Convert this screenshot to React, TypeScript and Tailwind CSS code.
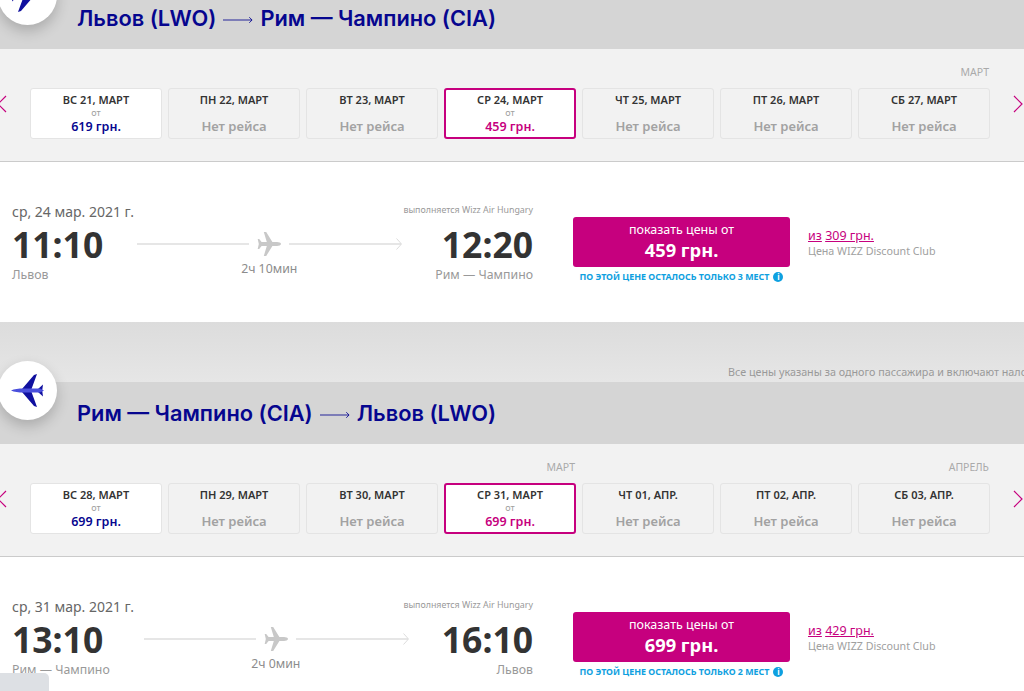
import React from 'react';

const body = "font-['Noto_Sans','Open_Sans',sans-serif]";

type Day = { label: string; price?: string; selected?: boolean };
type Leg = {
  from: string;
  to: string;
  date: string;
  dep: string;
  arr: string;
  depCity: string;
  arrCity: string;
  duration: string;
  price: string;
  seats: string;
  club: string;
  flip?: boolean;
  months: string[];
  days: Day[];
};

const legs: Leg[] = [
  {
    from: 'Львов (LWO)',
    to: 'Рим — Чампино (CIA)',
    date: 'ср, 24 мар. 2021 г.',
    dep: '11:10',
    arr: '12:20',
    depCity: 'Львов',
    arrCity: 'Рим — Чампино',
    duration: '2ч 10мин',
    price: '459 грн.',
    seats: 'ПО ЭТОЙ ЦЕНЕ ОСТАЛОСЬ ТОЛЬКО 3 МЕСТ',
    club: '309 грн.',
    flip: true,
    months: ['', '', '', '', '', '', 'МАРТ'],
    days: [
      { label: 'ВС 21, МАРТ', price: '619 грн.' },
      { label: 'ПН 22, МАРТ' },
      { label: 'ВТ 23, МАРТ' },
      { label: 'СР 24, МАРТ', price: '459 грн.', selected: true },
      { label: 'ЧТ 25, МАРТ' },
      { label: 'ПТ 26, МАРТ' },
      { label: 'СБ 27, МАРТ' },
    ],
  },
  {
    from: 'Рим — Чампино (CIA)',
    to: 'Львов (LWO)',
    date: 'ср, 31 мар. 2021 г.',
    dep: '13:10',
    arr: '16:10',
    depCity: 'Рим — Чампино',
    arrCity: 'Львов',
    duration: '2ч 0мин',
    price: '699 грн.',
    seats: 'ПО ЭТОЙ ЦЕНЕ ОСТАЛОСЬ ТОЛЬКО 2 МЕСТ',
    club: '429 грн.',
    months: ['', '', '', 'МАРТ', '', '', 'АПРЕЛЬ'],
    days: [
      { label: 'ВС 28, МАРТ', price: '699 грн.' },
      { label: 'ПН 29, МАРТ' },
      { label: 'ВТ 30, МАРТ' },
      { label: 'СР 31, МАРТ', price: '699 грн.', selected: true },
      { label: 'ЧТ 01, АПР.' },
      { label: 'ПТ 02, АПР.' },
      { label: 'СБ 03, АПР.' },
    ],
  },
];

const PLANE =
  'M24 12.5c0-1.2-2.2-1.9-4-1.9h-4.6L9.2 .5H6.8l3 10.1H4.6L2.2 7.6H.7l1.1 4.9-1.1 4.9h1.5l2.4-3h5.2l-3 10.1h2.4l6.2-10.1H20c1.8 0 4-.7 4-1.9z';

const PlaneBadge = ({ flip }: { flip?: boolean }) => (
  <div className="absolute left-[-2px] top-[-21px] z-10 flex h-[59px] w-[59px] items-center justify-center rounded-full bg-white shadow-[0_6px_14px_rgba(0,0,0,0.2)]">
    <svg viewBox="0 0 37 37" className={`h-[37px] w-[37px] ${flip ? '-scale-x-100' : ''}`}>
      <path d="M13 17 L25 3 L28 2 L22.5 17 Z M13 20 L25 34 L28 35 L22.5 20 Z" fill="#10109f" />
      <path d="M29 17 L34 12.5 L33.2 18.5 L34 24.5 L29 20 Z" fill="#10109f" />
      <path d="M2 18.5 C5 17 10 16.5 14 16.5 H31 L35 18.5 L31 20.5 H14 C10 20.5 5 20 2 18.5 Z" fill="#4a4fdc" />
    </svg>
  </div>
);

const Chevron = ({ right }: { right?: boolean }) => (
  <svg viewBox="0 0 10 18" className="h-[18px] w-[10px]" fill="none" stroke="#c6007e" strokeWidth="1.2">
    <path d={right ? 'M1 1l8 8-8 8' : 'M9 1L1 9l8 8'} />
  </svg>
);

const DayCard = ({ day }: { day: Day }) => {
  const box = day.selected
    ? 'bg-white border-2 border-[#c6007e] pt-[3px]'
    : day.price
      ? 'bg-white border border-[#e4e4e4] pt-[4px]'
      : 'bg-[#f2f2f2] border border-[#e4e4e4] pt-[4px]';
  return (
    <div className={`flex h-[51px] flex-col items-center rounded-[3px] ${box}`}>
      <div className="text-[11px] leading-[14px] font-semibold text-[#333]">{day.label}</div>
      {day.price ? (
        <>
          <div className="mt-[1px] text-[9px] leading-[10px] text-[#a0a0a0]">от</div>
          <div className={`mt-[1px] text-[12.5px] leading-[16px] font-semibold ${day.selected ? 'text-[#c6007e]' : 'text-[#06068f]'}`}>
            {day.price}
          </div>
        </>
      ) : (
        <div className="mt-[10px] text-[13px] leading-[18px] font-semibold text-[#a2a2a2]">Нет рейса</div>
      )}
    </div>
  );
};

const FlightLine = ({ duration }: { duration: string }) => (
  <div className="mx-[34px] flex flex-1 flex-col items-center">
    <div className="flex h-[26px] w-full items-center gap-[8px]">
      <div className="h-[2px] flex-1 bg-[#e6e6e6]" />
      <svg viewBox="0 0 24 25" className="h-[26px] w-[24px]">
        <path d={PLANE} fill="#c8c8c8" />
      </svg>
      <div className="relative h-[2px] flex-1 bg-[#e6e6e6]">
        <svg viewBox="0 0 6 12" className="absolute right-[-1px] top-[-5px] h-[12px] w-[6px]" fill="none" stroke="#dcdcdc">
          <path d="M.5.5l5 5.5-5 5.5" />
        </svg>
      </div>
    </div>
    <div className="mt-[3px] text-[12.3px] leading-[18px] text-[#8c8c8c]">{duration}</div>
  </div>
);

const Section = ({ leg }: { leg: Leg }) => (
  <section>
    <div className="relative flex h-[62px] items-start bg-[#d5d5d5] pl-[77px] pt-[17px]">
      <PlaneBadge flip={leg.flip} />
      <h2 className="flex items-center font-['Inter',sans-serif] text-[21.8px] leading-[28px] font-semibold text-[#06068f]">
        {leg.from}
        <svg viewBox="0 0 32 8" className="mx-[7px] mt-[3px] h-[8px] w-[30px]" fill="none" stroke="#06068f" strokeWidth="0.9">
          <path d="M0 4h31M28 1l3 3-3 3" />
        </svg>
        {leg.to}
      </h2>
    </div>

    <div className="flex h-[113px] border-b border-[#cbcbcb] bg-[#f2f2f2] pt-[16px]">
      <div className="w-[30px] pt-[30px]">
        <div className="ml-[-3px]">
          <Chevron />
        </div>
      </div>
      <div className="w-[960px]">
        <div className="grid h-[23px] grid-cols-7 gap-[6px]">
          {leg.months.map((m, i) => (
            <div key={i} className="pr-[1px] text-right text-[10.5px] leading-[14px] text-[#aaa]">{m}</div>
          ))}
        </div>
        <div className="grid grid-cols-7 gap-[6px]">
          {leg.days.map((d) => (
            <DayCard key={d.label} day={d} />
          ))}
        </div>
      </div>
      <div className="flex flex-1 justify-end pt-[30px] pr-[1px]">
        <Chevron right />
      </div>
    </div>

    <div className="flex h-[160px] bg-white pl-[12px] pt-[39px]">
      <div className="w-[521px]">
        <div className="flex h-[20px] items-center justify-between">
          <span className="text-[14px] text-[#666]">{leg.date}</span>
          <span className="text-[8.85px] text-[#999]">выполняется Wizz Air Hungary</span>
        </div>
        <div className="mt-[1px] flex">
          <div>
            <div className="text-[35.5px] leading-[44px] font-bold text-[#333]">{leg.dep}</div>
            <div className="mt-[1px] text-[12.3px] leading-[16px] text-[#999]">{leg.depCity}</div>
          </div>
          <div className="flex flex-1 pt-[9px]">
            <FlightLine duration={leg.duration} />
          </div>
          <div className="text-right">
            <div className="text-[35.5px] leading-[44px] font-bold text-[#333]">{leg.arr}</div>
            <div className="mt-[1px] text-[12.3px] leading-[16px] text-[#999]">{leg.arrCity}</div>
          </div>
        </div>
      </div>
      <div className="ml-[40px] w-[217px] pt-[16px]">
        <button className="flex h-[50px] w-full flex-col items-center justify-center rounded-[3px] bg-[#c6007e] pb-[2px] text-white">
          <span className="text-[12.5px] leading-[17px]">показать цены от</span>
          <span className="text-[18.3px] leading-[24px] font-bold">{leg.price}</span>
        </button>
        <div className="mt-[4px] flex items-center justify-center gap-[4px]">
          <span className="text-[8.9px] leading-[12px] font-bold text-[#0ea0e0]">{leg.seats}</span>
          <span className="flex h-[10px] w-[10px] items-center justify-center rounded-full bg-[#0ea0e0] text-[8px] leading-none font-bold text-white">i</span>
        </div>
      </div>
      <div className="ml-[18px] pt-[27px]">
        <div className="text-[12.5px] leading-[16px] text-[#c6007e]">
          <span className="underline">из</span> <span className="underline">{leg.club}</span>
        </div>
        <div className="text-[10.7px] leading-[14px] text-[#a0a0a0]">Цена WIZZ Discount Club</div>
      </div>
    </div>
  </section>
);

export default function App() {
  return (
    <div className={`relative h-[691px] w-[1024px] overflow-hidden bg-white ${body}`}>
      <div className="mt-[-13px]">
        <Section leg={legs[0]} />
        <div className="flex h-[60px] items-end justify-start whitespace-nowrap bg-gradient-to-b from-[#dcdcdc] to-[#e6e6e6] pb-[3px] pl-[728px]">
          <span className="text-[10.75px] leading-[14px] text-[#999]">Все цены указаны за одного пассажира и включают налоги</span>
        </div>
        <Section leg={legs[1]} />
      </div>
      <div className="absolute bottom-0 left-0 h-[18px] w-[49px] rounded-tr-[5px] bg-[#dde0e4]" />
    </div>
  );
}
